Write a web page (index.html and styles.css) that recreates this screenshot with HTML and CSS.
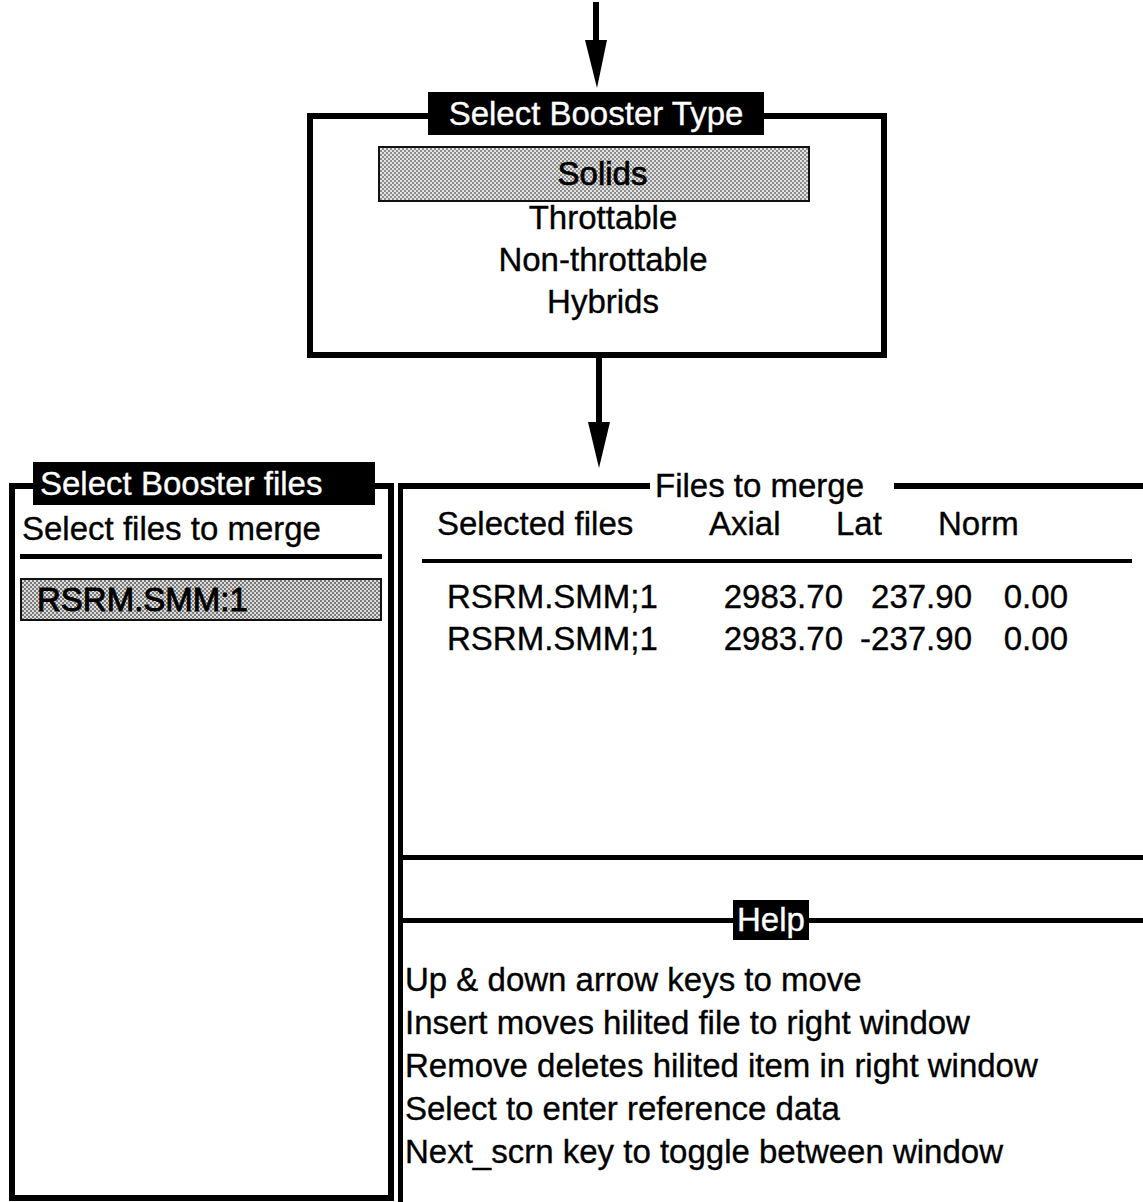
FILE: index.html
```html
<!DOCTYPE html>
<html lang="en">
<head>
  <meta charset="UTF-8">
  <meta name="viewport" content="width=device-width, initial-scale=1.0">
  <title>Select Booster Files</title>
  <link rel="stylesheet" href="styles.css">
</head>
<body>
  <div class="screen">
    <svg class="arrow arrow-top" width="24" height="90" viewBox="0 0 24 90">
      <rect x="8" y="2" width="6" height="42"/>
      <polygon points="0,40 22,40 12,88"/>
    </svg>

    <div class="type-box">
      <div class="tag tag-type">Select Booster Type</div>
      <ul class="type-list">
        <li class="hilite">Solids</li>
        <li>Throttable</li>
        <li>Non-throttable</li>
        <li>Hybrids</li>
      </ul>
    </div>

    <svg class="arrow arrow-mid" width="24" height="125" viewBox="0 0 24 125">
      <rect x="9" y="0" width="6" height="66"/>
      <polygon points="1,64 23,64 12,110"/>
    </svg>

    <div class="panels">
      <div class="file-panel">
        <div class="tag tag-files">Select Booster files</div>
        <div class="file-head">Select files to merge</div>
        <div class="rule rule-left"></div>
        <div class="file-item">RSRM.SMM:1</div>
      </div>

      <div class="right-col">
        <div class="merge-panel">
          <div class="plain-tag">Files to merge</div>
          <div class="merge-head">
            <span>Selected files</span>
            <span>Axial</span>
            <span>Lat</span>
            <span>Norm</span>
          </div>
          <div class="rule rule-right"></div>
          <div class="merge-row">
            <span>RSRM.SMM;1</span>
            <span class="num">2983.70</span>
            <span class="num">237.90</span>
            <span class="num">0.00</span>
          </div>
          <div class="merge-row">
            <span>RSRM.SMM;1</span>
            <span class="num">2983.70</span>
            <span class="num">-237.90</span>
            <span class="num">0.00</span>
          </div>
        </div>

        <div class="help-panel">
          <div class="tag tag-help">Help</div>
          <div class="help-text">
            <div>Up &amp; down arrow keys to move</div>
            <div>Insert moves hilited file to right window</div>
            <div>Remove deletes hilited item in right window</div>
            <div>Select to enter reference data</div>
            <div>Next_scrn key to toggle between window</div>
          </div>
        </div>
      </div>
    </div>
  </div>
</body>
</html>
```

FILE: styles.css
```css
html, body {
  margin: 0;
  padding: 0;
  background: #fff;
  overflow: hidden;
}
body {
  width: 1143px;
  height: 1202px;
  font-family: "Liberation Sans", Arial, sans-serif;
  font-size: 33px;
  color: #000;
  -webkit-text-stroke: 0.35px currentColor;
}
.arrow {
  display: block;
  fill: #000;
}
.arrow-top {
  margin-left: 585px;
  margin-bottom: 23px;
}
.arrow-mid {
  margin-left: 587px;
}

/* black title tags sitting on the frame lines */
.tag {
  position: absolute;
  background: #000;
  color: #fff;
  white-space: nowrap;
}

.type-box {
  position: relative;
  box-sizing: border-box;
  margin-left: 307px;
  width: 580px;
  border: 6px solid #000;
  padding: 27px 0 29px;
}
.tag-type {
  top: -27px;
  left: 115px;
  width: 336px;
  height: 43px;
  line-height: 43px;
  text-align: center;
}
.type-list {
  list-style: none;
  margin: 0;
  padding: 0 0 0 12px;
  text-align: center;
  line-height: 42px;
}
.hilite {
  box-sizing: border-box;
  width: 432px;
  margin: 0 0 -5px 53px;
  padding-left: 17px;
  line-height: 52px;
  border: 2px solid #111;
  background: repeating-conic-gradient(#8c8c8c 0 25%, #e4e4e4 0 50%) 0 0 / 4px 4px;
  -webkit-text-stroke: 0.7px #000;
}

.panels {
  display: flex;
  height: 719px;
}

.file-panel {
  position: relative;
  box-sizing: border-box;
  margin-left: 9px;
  width: 385px;
  height: 718px;
  border: 6px solid #000;
  padding-top: 18px;
}
.tag-files {
  top: -27px;
  left: 18px;
  box-sizing: border-box;
  width: 342px;
  height: 43px;
  line-height: 43px;
  padding-left: 7px;
}
.file-head {
  padding-left: 7px;
  line-height: 43px;
}
.rule {
  background: #000;
}
.rule-left {
  height: 5px;
  margin: 4px 6px 0 5px;
}
.file-item {
  box-sizing: border-box;
  margin: 19px 6px 0 5px;
  height: 43px;
  line-height: 39px;
  padding-left: 15px;
  border: 2px solid #111;
  background: repeating-conic-gradient(#7a7a7a 0 25%, #dcdcdc 0 50%) 0 0 / 4px 4px;
  -webkit-text-stroke: 0.9px #000;
}

.right-col {
  flex: 1;
  margin-left: 4px;
  border-left: 5px solid #000;
}
.merge-panel {
  position: relative;
  box-sizing: border-box;
  height: 377px;
  border-top: 6px solid #000;
  border-bottom: 5px solid #000;
  padding-top: 13px;
}
.plain-tag {
  position: absolute;
  top: -23px;
  left: 247px;
  padding: 0 30px 0 5px;
  line-height: 40px;
  background: #fff;
}
.merge-head {
  display: grid;
  grid-template-columns: 272px 127px 102px auto;
  padding-left: 34px;
  line-height: 43px;
}
.rule-right {
  height: 4px;
  width: 710px;
  margin: 14px 0 0 19px;
}
.merge-row {
  display: grid;
  grid-template-columns: 220px 176px 129px 96px;
  padding-left: 44px;
  line-height: 42px;
}
.rule-right + .merge-row {
  margin-top: 13px;
}
.num {
  text-align: right;
}

.help-panel {
  position: relative;
  margin-top: 58px;
  border-top: 5px solid #000;
}
.tag-help {
  top: -23px;
  left: 330px;
  padding: 0 4px;
  height: 40px;
  line-height: 40px;
}
.help-text {
  padding: 35px 0 0 2px;
  line-height: 43px;
}
```
